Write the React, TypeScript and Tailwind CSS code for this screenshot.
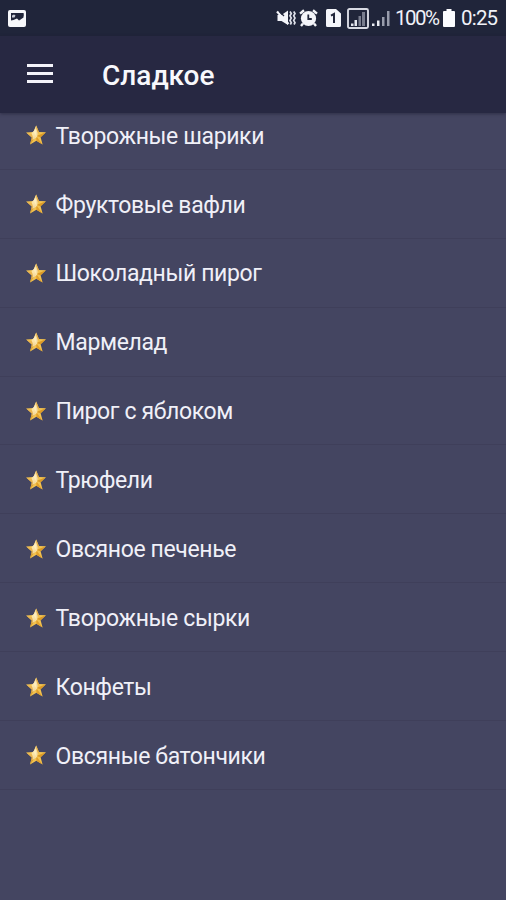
import React from 'react'

const items = [
    'Творожные шарики',
    'Фруктовые вафли',
    'Шоколадный пирог',
    'Мармелад',
    'Пирог с яблоком',
    'Трюфели',
    'Овсяное печенье',
    'Творожные сырки',
    'Конфеты',
    'Овсяные батончики',
]

const PictureIcon = () => (
    <svg width="18" height="17" viewBox="0 0 18 17">
        <rect width="18" height="17" rx="2" fill="#f7f8fb" />
        <path d="M3 3h12.500v3l-4.500 4.500-2-2L5.500 10 3 10.500z" fill="#20253a" />
        <path d="M4 5.500 6 4.500l1.500 1-1 2H4z" fill="#c9ccd6" />
        <path d="m15.500 3-4.500 7.500 4.500-3z" fill="#20253a" />
    </svg>
)

const MuteIcon = () => (
    <svg width="20" height="18" viewBox="0 0 20 18">
        <path d="M1.500 6h4L12 1.500v14.500L5.500 12h-4z" fill="#f4f5fa" />
        <path d="M1 2.500 12.500 15" stroke="#f4f5fa" strokeWidth="2.200" />
        <path d="M3.500 2.500 8 7" stroke="#20253a" strokeWidth="1.200" />
        <path d="m14 2.500 1.300 2L14 6.800l1.300 2.300L14 11.400l1.300 2.300-1 1.800M17.700 2.500l1.300 2-1.300 2.300 1.300 2.300-1.300 2.300 1.300 2.300-1 1.800" fill="none" stroke="#dfe1ea" strokeWidth="1.700" />
    </svg>
)

const AlarmIcon = () => (
    <svg width="19" height="18" viewBox="0 0 19 18">
        <path d="M1 4.600 5 1.300M18 4.600l-4-3.300M4 14.500l-2 2.500M15 14.500l2 2.500" stroke="#f4f5fa" strokeWidth="2.400" />
        <circle cx="9.500" cy="9.500" r="7.600" fill="#f4f5fa" />
        <path d="M9.300 5.500v4.500h3.500" fill="none" stroke="#20253a" strokeWidth="1.800" />
    </svg>
)

const SimIcon = () => (
    <svg width="15" height="18" viewBox="0 0 15 18">
        <path d="M1.500 0H10l5 4.500v12a1.500 1.500 0 0 1-1.500 1.500h-12A1.500 1.500 0 0 1 0 16.500v-15A1.500 1.500 0 0 1 1.500 0z" fill="#f4f5fa" />
        <path d="M5 6.600 8 5v9" fill="none" stroke="#20253a" strokeWidth="2" />
    </svg>
)

const SignalBoxIcon = () => (
    <svg width="22" height="21" viewBox="0 0 22 21">
        <rect x="1" y="1" width="20" height="19" rx="1.500" fill="none" stroke="#d9dbe4" strokeWidth="1.900" />
        <path d="M11.500 18V8H14v10zM15 18V4h3v14z" fill="#787c8d" />
        <path d="M4 18v-2.500h2.500V18zM7.500 18v-6H10v6z" fill="#e4e6ee" />
    </svg>
)

const SignalIcon = () => (
    <svg width="18" height="18" viewBox="0 0 18 18">
        <path d="M0 17v-2.500h2.500V17zM5 17v-5.500h2.500V17z" fill="#eceef4" />
        <path d="M10 17V8h2.500v9zM15 17V2h2.500v15z" fill="#989cab" />
    </svg>
)

const BatteryIcon = () => (
    <svg width="12" height="18" viewBox="0 0 12 18" fill="#fbfcff">
        <path d="M3.500 0h5v2H11a1 1 0 0 1 1 1v14a1 1 0 0 1-1 1H1a1 1 0 0 1-1-1V3a1 1 0 0 1 1-1h2.500z" />
    </svg>
)

const StarIcon = () => (
    <svg width="20" height="20" viewBox="0 0 20 20" className="shrink-0">
        <path d="M10.200.500 12.900 6.900l7 .4-5.300 5 2 7.200-6.200-3.800-6.300 3.800 1.700-7.100L.2 7.600l7.200-.7z" fill="#f3c350" />
        <path d="M10.200.500 12.900 6.900 10.200 11z" fill="#e3ab45" />
        <path d="M10.200.500V11L7.400 6.900z" fill="#f9dfa0" />
        <path d="M.2 7.600 10.200 11l-4.400 1.400z" fill="#eab450" />
        <path d="m10.200 11-6.100 8.500 1.700-7.100z" fill="#d9a036" />
        <path d="m19.900 7.300-5.300 5L10.200 11z" fill="#dd9a26" />
        <path d="m10.200 11 .2 4.700 6.200 3.800z" fill="#e2a02c" />
        <path d="m5.500 8.100 3.400-3 1.300-1.300L11.800 8l-.8 4-4.500 3 .3-3.200z" fill="#fff2cb" opacity=".7" />
    </svg>
)

const StatusBar = () => (
    <div className="flex h-9 shrink-0 items-center bg-[#20253a] pl-2 text-[20.5px] text-[#f0f2f8]">
        <PictureIcon />
        <div className="ml-auto flex items-center pr-2">
            <MuteIcon />
            <div className="ml-[3px]"><AlarmIcon /></div>
            <div className="ml-2"><SimIcon /></div>
            <div className="ml-1.5"><SignalBoxIcon /></div>
            <div className="ml-[3px]"><SignalIcon /></div>
            <span className="ml-[5px] w-[45px] whitespace-nowrap tracking-[-1.5px]">100%</span>
            <div className="ml-[3px]"><BatteryIcon /></div>
            <span className="ml-1.5 w-[37px] whitespace-nowrap tracking-[-0.8px]">0:25</span>
        </div>
    </div>
)

const Header = () => (
    <header className="z-10 flex h-[77px] shrink-0 items-center bg-[#272842] pl-[27px] shadow-[0_1px_3px_rgba(25,25,45,0.5)]">
        <div className="mb-[3px] flex w-[26px] flex-col gap-[5px]">
            <div className="h-[3px] bg-[#f4f4fa]" />
            <div className="h-[3px] bg-[#f4f4fa]" />
            <div className="h-[3px] bg-[#f4f4fa]" />
        </div>
        <h1 className="ml-[49px] pt-[3px] text-[28px] font-medium text-[#f8f8fc]">Сладкое</h1>
    </header>
)

const App = () => {
    return (
        <div className="flex h-[900px] w-[506px] flex-col overflow-hidden bg-[#444561] font-['Roboto',sans-serif]">
            <StatusBar />
            <Header />
            <ul className="-mt-3">
                {items.map((item) => (
                    <li
                        key={item}
                        className="flex h-[68.9px] items-center gap-[9.6px] border-b border-[#3f3f5a] pl-[26px] text-[23px] tracking-[-0.37px] text-[#f0f0f8]"
                    >
                        <div className="pt-px">
                            <StarIcon />
                        </div>
                        <span className="pt-1">{item}</span>
                    </li>
                ))}
            </ul>
        </div>
    )
}

export default App
